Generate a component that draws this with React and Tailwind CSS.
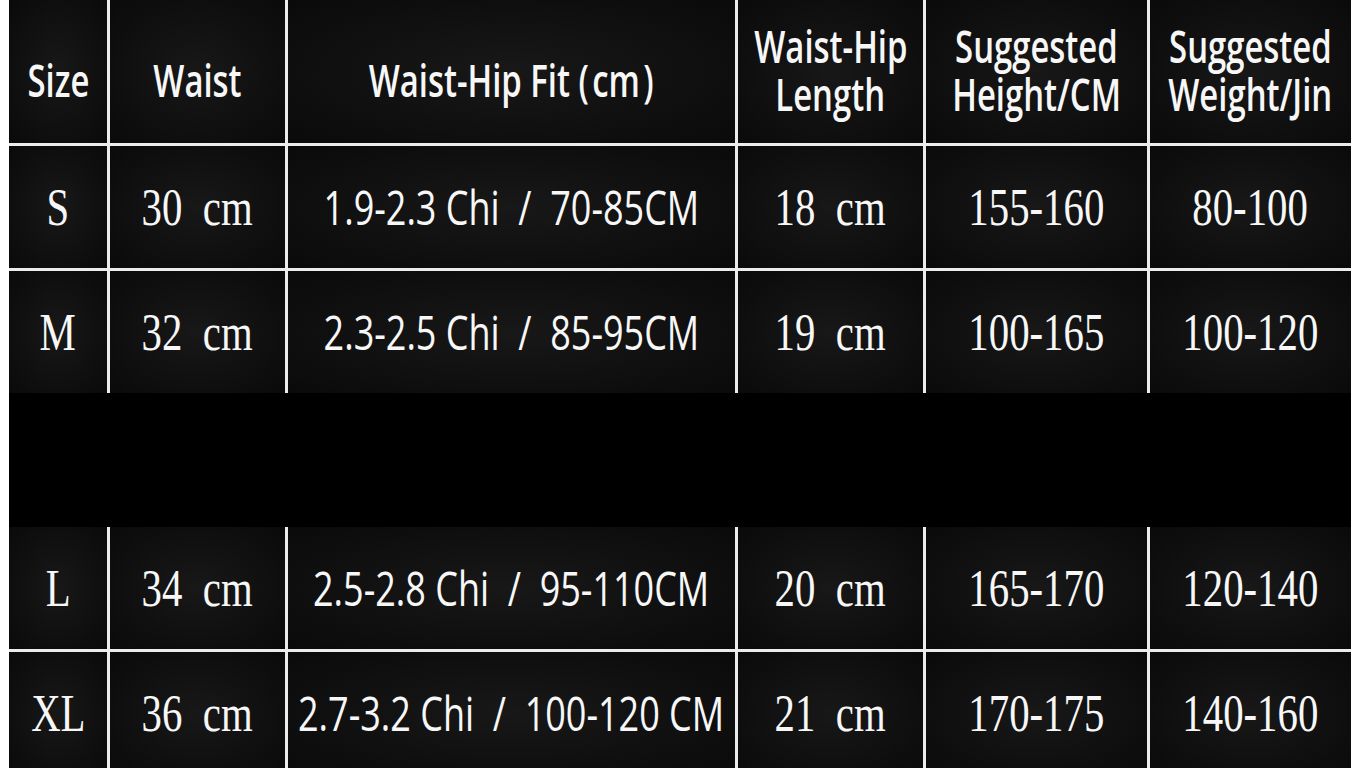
import React from 'react';

const headers = [
  { lines: ['Size'] },
  { lines: ['Waist'] },
  { lines: ['Waist-Hip Fit (\u200acm\u200a)'] },
  { lines: ['Waist-Hip', 'Length'] },
  { lines: ['Suggested', 'Height/CM'] },
  { lines: ['Suggested', 'Weight/Jin'] },
];

const topRows = [
  ['S', '30  cm', '1.9-2.3 Chi  /  70-85CM', '18  cm', '155-160', '80-100'],
  ['M', '32  cm', '2.3-2.5 Chi  /  85-95CM', '19  cm', '100-165', '100-120'],
];

const bottomRows = [
  ['L', '34  cm', '2.5-2.8 Chi  /  95-110CM', '20  cm', '165-170', '120-140'],
  ['XL', '36  cm', '2.7-3.2 Chi  /  100-120 CM', '21  cm', '170-175', '140-160'],
];

const cols = 'grid-cols-[98px_175px_447px_185px_221px_201px]';
const cell = 'flex items-center justify-center bg-radial from-[#181818] to-[#0a0a0a] text-[#f7f7f7]';

const HeaderCell = ({ lines }) => (
  <div className={`${cell} ${lines.length === 1 ? 'pt-4' : 'pb-1'}`}>
    <div className="flex flex-col items-center font-['Open_Sans',sans-serif] text-[45px] font-semibold leading-[48px]">
      {lines.map((l) => (
        <span key={l} className="inline-block scale-x-[0.73] whitespace-pre">{l}</span>
      ))}
    </div>
  </div>
);

const BodyCell = ({ text, fit }) => (
  <div className={cell}>
    {fit ? (
      <span className="inline-block scale-x-[0.75] whitespace-pre font-['Open_Sans',sans-serif] text-[48px] font-medium leading-none">
        {text}
      </span>
    ) : (
      <span className="inline-block scale-x-[0.77] whitespace-pre font-['Liberation_Serif',serif] text-[53px] leading-none">
        {text}
      </span>
    )}
  </div>
);

const Row = ({ row }) =>
  row.map((t, i) => <BodyCell key={i} text={t} fit={i === 2} />);

export default function App() {
  return (
    <div className="h-[768px] w-[1360px] overflow-hidden bg-white px-[9px]">
      <div className={`grid ${cols} grid-rows-[143px_122px_122px] gap-[3px] bg-[#ececec]`}>
        {headers.map((h, i) => (
          <HeaderCell key={i} lines={h.lines} />
        ))}
        {topRows.map((r, i) => (
          <Row key={i} row={r} />
        ))}
      </div>
      <div className="h-[134px] bg-black" />
      <div className={`grid ${cols} grid-rows-[122px_122px] gap-[3px] bg-[#ececec]`}>
        {bottomRows.map((r, i) => (
          <Row key={i} row={r} />
        ))}
      </div>
    </div>
  );
}
